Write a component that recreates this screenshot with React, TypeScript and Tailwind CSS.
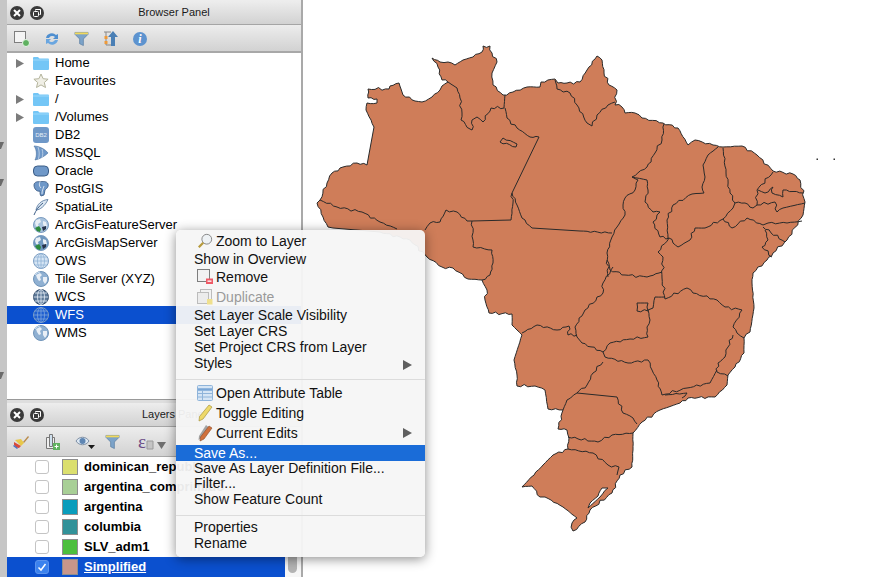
import React from 'react';

const coast = [
  '368 89 389 89 390 86 399 83 403 95 415 101 422 102 432 97 440 90 442 86 448 82 442 80 438 67 432 58 440 62 448 62 455 65 463 60 473 57 482 52 483 46 490 46 492 53 497 62 492 73 493 85 503 95 513 92 527 87 540 87 541 82 555 79 558 83 567 83 580 82 587 70 597 56 602 60 604 73 609 85 617 90 615 105 622 107 625 113 635 113 642 118 663 123 678 128 688 145 695 140 713 145 723 147 742 146 757 155 773 171 793 174 800 180 805 202 803 215 787 240 773 253 767 260 753 273 752 283 754 308 750 332 744 338 744 353 735 367 728 375 727 385 715 397 688 398 680 403 660 410 642 422 633 433 633 450 632 467 620 475 612 493 590 510 585 522 573 531 572 523 577 518 563 507 545 497 540 497 532 486 522 487 543 465 553 455 568 449 569 438 567 430 558 429 563 410 548 409 545 390 535 386 517 386 517 375 514 360 522 335 512 325 512 314 489 313 485 300 487 290 482 280 468 279 453 268 442 267 427 257 410 240 380 232 333 228 328 227 323 217 317 203 320 200 327 183 332 173 343 167 357 163 367 165 374 127 366 110 367 103 377 103 377 99 368 98 368 89',
  '588 508 600 497 608 488 602 488 598 496 590 503 588 508',
];

const borders = [
  '320 200 337 207 362 212 380 222 397 229',
  '448 82 457 88 460 98 462 113 461 120 470 129 472 130 472 120 477 117 483 122 491 108 504 108 505 95',
  '505 108 507 118 517 128 530 137 539 137 512 193 513 203 511 220 472 221 467 221 457 212 446 210 440 222 430 223 425 230',
  '500 142 503 138 517 144 516 147 500 142',
  '512 193 517 205 522 218 532 228 580 231 612 233',
  '472 221 473 240 473 247 492 250 493 263 490 275 482 280',
  '555 80 557 89 570 93 577 105 587 123 592 126 597 115 608 105 615 102',
  '664 124 662 140 655 153 647 167 632 177 638 180 635 190 625 198 623 205 625 215 617 227 612 237 607 253 608 277',
  '632 177 647 180 648 190 645 202 653 212 660 212 653 222 660 237 669 238',
  '718 147 708 155 703 165 705 177 702 187 704 193 692 194 673 205 667 220 668 238',
  '669 238 678 247 690 240 695 228 705 228 723 219 733 208 735 203 730 193 726 173 723 148',
  '735 203 745 203 753 208 757 205 757 190 773 172',
  '758 190 765 193 773 187 772 193 783 197 783 190 803 193',
  '757 205 775 202 777 212 783 208 805 203',
  '723 219 732 228 747 218 763 225 768 223 787 223 802 221',
  '763 227 785 242',
  '765 230 768 240 762 247 772 257',
  '669 238 658 252 663 257 662 278 665 299',
  '607 260 610 270 625 275 647 277 662 272',
  '613 267 603 283 603 293 585 310 575 327 577 337',
  '577 335 568 335 569 326 557 330 537 325 522 333',
  '577 337 582 343 603 352 610 343 630 339 648 337 647 327 650 320 648 310 653 308 655 297 665 297',
  '637 303 648 303 648 311 637 311 637 303',
  '665 299 687 288 693 293 717 300 725 307 742 310 733 327 737 333 744 338',
  '733 335 728 347 725 357 718 363 717 372 728 376',
  '717 370 710 383 687 388 662 395 657 380 652 370 648 360 628 363 605 357 603 352',
  '603 362 593 373 587 385 577 393 567 400 563 410',
  '577 393 617 397 623 413 633 418 637 424',
  '665 395 687 393 682 398',
  '568 437 598 442 612 435 633 433',
  '568 449 593 453 608 465 619 467 617 475',
];

// long runs are the straight state lines, shorter ones get a little wobble like the real outline
const roughen = (pts: string) => {
  const n = pts.split(' ').map(Number);
  let out = `${n[0]} ${n[1]}`;
  for (let i = 2; i < n.length; i += 2) {
    const [x0, y0, x1, y1] = [n[i - 2], n[i - 1], n[i], n[i + 1]];
    const len = Math.hypot(x1 - x0, y1 - y0);
    if (len > 6 && len <= 36) {
      const steps = Math.round(len / 3.5);
      for (let s = 1; s < steps; s++) {
        const t = s / steps;
        const amp = Math.sin(Math.PI * t) * (Math.sin(x0 * 1.7 + y1 + s * 2.3) + Math.sin(y0 * 0.9 + s * 4.1)) * 0.8;
        const px = x0 + (x1 - x0) * t - ((y1 - y0) / len) * amp;
        const py = y0 + (y1 - y0) * t + ((x1 - x0) / len) * amp;
        out += ` ${px.toFixed(1)} ${py.toFixed(1)}`;
      }
    }
    out += ` ${x1} ${y1}`;
  }
  return out;
};

const Folder = () => (
  <svg width="16" height="14" viewBox="0 0 16 14">
    <path d="M0 2a1 1 0 0 1 1-1h4l1.500 1.500H15a1 1 0 0 1 1 1V13a1 1 0 0 1-1 1H1a1 1 0 0 1-1-1z" fill="#74c6f6" />
    <rect x="0" y="3.500" width="16" height="1" fill="#9bd8fa" />
  </svg>
);

const Star = () => (
  <svg width="16" height="16" viewBox="0 0 16 16">
    <path d="M8 1l2.100 4.700 5 .5-3.800 3.300 1.200 5L8 11.900 3.500 14.500l1.200-5L.9 6.200l5-.5z" fill="#f0efe6" stroke="#b4b49c" />
  </svg>
);

const Globe = ({ fill = '#9dbcdc', land = false, dark = false, line = '#ffffff' }: { fill?: string; land?: boolean; dark?: boolean; line?: string }) => (
  <svg width="16" height="16" viewBox="0 0 16 16">
    <circle cx="8" cy="8" r="7.500" fill={fill} stroke={dark ? '#37506e' : '#7b9cc0'} />
    {land ? (
      <>
        <path d="M3 3l4-1 1 3-3 2 1 3-3-1-1-3zM10 4l3 1 1 4-3 1-1-3z" fill="#e8eef5" />
        <path d="M2 11l4-2 2 3-1 3-3-1z" fill="#2d8a3e" />
        <path d="M9 10l4-1 0 3-3 2z" fill="#27324a" />
      </>
    ) : (
      <>
        <ellipse cx="8" cy="8" rx="3.500" ry="7.500" fill="none" stroke={line} strokeWidth="0.800" />
        <path d="M.5 8h15M1.700 4h12.600M1.700 12h12.600M8 .5v15" stroke={line} strokeWidth="0.800" />
      </>
    )}
  </svg>
);

const WorldGlobe = () => (
  <svg width="16" height="16" viewBox="0 0 16 16">
    <circle cx="8" cy="8" r="7.500" fill="#8fb0d2" stroke="#6f93b8" />
    <path d="M3 4l4-2 2 2-2 2 1 3-2 1-2-3zM10 6l4 0 0 4-2 3-2-3z" fill="#e9eff6" />
    <path d="M2 4a7 7 0 0 1 5-3" stroke="#c9dcef" fill="none" />
  </svg>
);

const treeRows: { label: string; arrow?: boolean; icon: React.ReactNode; selected?: boolean }[] = [
  { label: 'Home', arrow: true, icon: <Folder /> },
  { label: 'Favourites', icon: <Star /> },
  { label: '/', arrow: true, icon: <Folder /> },
  { label: '/Volumes', arrow: true, icon: <Folder /> },
  {
    label: 'DB2',
    icon: (
      <span className="flex h-4 w-4 items-center justify-center rounded-[3px] bg-[#6f98c8] text-[6px] leading-none text-[#e6eef7]">DB2</span>
    ),
  },
  {
    label: 'MSSQL',
    icon: (
      <svg width="16" height="16" viewBox="0 0 16 16">
        <path d="M1 1c5 0 11 3 14 7-3 3-8 6-13 7 2-4 2-10-1-14z" fill="#6f98c8" stroke="#48709f" strokeWidth="0.600" />
        <path d="M5 2c1.500 4 1.500 8 .5 12M9 4c1 3 1 6 0 9" stroke="#d5e2f0" fill="none" strokeWidth="0.700" />
      </svg>
    ),
  },
  {
    label: 'Oracle',
    icon: (
      <svg width="16" height="16" viewBox="0 0 16 16">
        <rect x="0.500" y="3" width="15" height="10" rx="4" fill="#6f98c8" stroke="#3b5c85" />
      </svg>
    ),
  },
  {
    label: 'PostGIS',
    icon: (
      <svg width="16" height="16" viewBox="0 0 16 16">
        <path d="M1 4c0-3 4-4 6-3 2-1 7-1 8 2 1 3-2 5-3 6l-1 5-3 1c-1-1-1-3-1-5-3 1-6-2-6-6z" fill="#6f98c8" stroke="#30527d" strokeWidth="0.800" />
        <path d="M7 1c-1 2-1 4 1 6M11 5c-1 3-2 5-2 8" stroke="#ffffff" fill="none" strokeWidth="0.700" />
      </svg>
    ),
  },
  {
    label: 'SpatiaLite',
    icon: (
      <svg width="16" height="16" viewBox="0 0 16 16">
        <path d="M15 .5C9 1 4 5 3 11c4 0 9-4 12-10.500z" fill="#dbe6f1" stroke="#50739c" strokeWidth="0.800" />
        <path d="M1 16c2-5 5-9 9-12" stroke="#3e5f88" fill="none" />
      </svg>
    ),
  },
  { label: 'ArcGisFeatureServer', icon: <Globe land fill="#a8c3de" /> },
  { label: 'ArcGisMapServer', icon: <Globe land fill="#6f98c0" /> },
  { label: 'OWS', icon: <Globe fill="#d6e5f4" line="#8fb2d6" /> },
  { label: 'Tile Server (XYZ)', icon: <WorldGlobe /> },
  { label: 'WCS', icon: <Globe fill="#5e7a99" dark line="#e6eef6" /> },
  { label: 'WFS', selected: true, icon: <Globe fill="#1f5fd0" line="#7ea6dd" /> },
  { label: 'WMS', icon: <WorldGlobe /> },
];

const layers = [
  { name: 'dominican_republic', color: '#dbdf6e' },
  { name: 'argentina_comprimido', color: '#a8cf96' },
  { name: 'argentina', color: '#0a9dbc' },
  { name: 'columbia', color: '#329299' },
  { name: 'SLV_adm1', color: '#4cbf3e' },
  { name: 'Simplified', color: '#c9968a', selected: true },
];

const WindowButtons = () => (
  <div className="flex w-[40px] shrink-0 items-center gap-[6px] pl-[3px]">
    <span className="flex h-[14px] w-[14px] items-center justify-center rounded-full bg-[#3a3a3a]">
      <svg width="8" height="8" viewBox="0 0 8 8">
        <path d="M1 1l6 6M7 1L1 7" stroke="#ffffff" strokeWidth="2" />
      </svg>
    </span>
    <span className="flex h-[14px] w-[14px] items-center justify-center rounded-full bg-[#3a3a3a]">
      <svg width="8" height="8" viewBox="0 0 8 8">
        <rect x="0.500" y="2.500" width="5" height="5" rx="1" fill="none" stroke="#ffffff" />
        <path d="M2.500 1.500V.5h5v5H6.500" fill="none" stroke="#ffffff" />
      </svg>
    </span>
  </div>
);

const TitleBar = ({ title }: { title: string }) => (
  <div className="flex h-[24px] shrink-0 items-center border-b border-[#a5a5a5] bg-gradient-to-b from-[#ededed] to-[#d2d2d2]">
    <WindowButtons />
    <div className="flex-1 text-center text-[11px] text-[#1a1a1a]">{title}</div>
  </div>
);

const Funnel = () => (
  <svg width="15" height="16" viewBox="0 0 16 16">
    <path d="M1 1h14v2l-5 5v7l-4-2V8L1 3z" fill="#7ca3c9" stroke="#54789e" strokeWidth="0.700" />
    <path d="M1 1h14v2H1z" fill="#f2d95c" />
  </svg>
);

const menuIcons: Record<string, React.ReactNode> = {
  zoom: (
    <svg width="18" height="18" viewBox="0 0 18 18">
      <circle cx="11" cy="7" r="5.500" fill="#eef2f5" stroke="#7c7c7c" />
      <path d="M7 11l-5 5" stroke="#b69a3c" strokeWidth="2.500" />
    </svg>
  ),
  remove: (
    <svg width="16" height="16" viewBox="0 0 16 16">
      <rect x="0.500" y="0.500" width="12" height="12" fill="#f2f2f2" stroke="#7e7e7e" />
      <rect x="9" y="9.500" width="7" height="5.500" fill="#ee5a66" />
      <rect x="10.500" y="11.500" width="4" height="1.300" fill="#ffffff" />
    </svg>
  ),
  duplicate: (
    <svg width="16" height="16" viewBox="0 0 16 16">
      <rect x="3.500" y="0.500" width="11" height="12" fill="#f2f2f2" stroke="#bcbcbc" />
      <rect x="0.500" y="3.500" width="11" height="11" fill="#ececec" stroke="#bcbcbc" />
      <rect x="10" y="10" width="5.500" height="5.500" fill="#efe08e" />
    </svg>
  ),
  table: (
    <svg width="16" height="16" viewBox="0 0 16 16">
      <rect x="0.500" y="0.500" width="15" height="15" rx="1" fill="#d5e5f5" stroke="#8fb4da" />
      <path d="M1 4.500h14" stroke="#79a6d6" strokeWidth="2.500" />
      <path d="M1 8.500h14M1 12h14M5.500 5v10" stroke="#8fb4da" />
    </svg>
  ),
  pencil: (
    <svg width="16" height="18" viewBox="0 0 16 18">
      <path d="M12 1l3 2-9 12-4 2 .5-4.500z" fill="#eed96a" stroke="#a8953c" strokeWidth="0.700" />
    </svg>
  ),
  edits: (
    <svg width="16" height="18" viewBox="0 0 16 18">
      <path d="M9 1l2.500 2-7 11-3 2 .5-4z" fill="#a3a3a3" />
      <path d="M12 2l3 2-8 11-4 2 .5-4z" fill="#d0703c" stroke="#8d4a25" strokeWidth="0.600" />
    </svg>
  ),
};

const Arrow = () => (
  <svg width="9" height="10" viewBox="0 0 9 10" className="absolute right-[13px] top-[5px]">
    <path d="M0 0l9 5-9 5z" fill="#5f5f5f" />
  </svg>
);

const menu: { label?: string; icon?: string; h?: string; sub?: boolean; disabled?: boolean; active?: boolean; sep?: string }[] = [
  { label: 'Zoom to Layer', icon: 'zoom', h: 'h-[18px]' },
  { label: 'Show in Overview', h: 'h-[18px]' },
  { label: 'Remove', icon: 'remove', h: 'h-[18px]' },
  { label: 'Duplicate', icon: 'duplicate', disabled: true, h: 'h-[21px] pt-[1px]' },
  { label: 'Set Layer Scale Visibility', h: 'h-[16px]' },
  { label: 'Set Layer CRS', h: 'h-[16px]' },
  { label: 'Set Project CRS from Layer', h: 'h-[16px]' },
  { label: 'Styles', sub: true, h: 'h-[16px]' },
  { sep: 'pt-[8px] pb-[3px]' },
  { label: 'Open Attribute Table', icon: 'table', h: 'h-[20px]' },
  { label: 'Toggle Editing', icon: 'pencil', h: 'h-[20px]' },
  { label: 'Current Edits', icon: 'edits', sub: true, h: 'h-[20px]' },
  { label: 'Save As...', active: true, h: 'h-[16px] mt-[2px] pb-[1px]' },
  { label: 'Save As Layer Definition File...', h: 'h-[15px] -mt-[1px]' },
  { label: 'Filter...', h: 'h-[16px]' },
  { label: 'Show Feature Count', h: 'h-[16px]' },
  { sep: 'pt-[8px] pb-[3px]' },
  { label: 'Properties', h: 'h-[16px]' },
  { label: 'Rename', h: 'h-[16px]' },
];

const ContextMenu = () => (
  <div className="absolute left-[176px] top-[230px] h-[327px] w-[249px] rounded-[5px] bg-[#f6f6f6]/95 pt-[2px] text-[14px] leading-none text-[#111] shadow-[0_2px_12px_rgba(0,0,0,0.45)]">
    {menu.map((item, i) =>
      item.sep ? (
        <div key={i} className={item.sep}>
          <div className="h-[1px] bg-[#dcdcdc]" />
        </div>
      ) : (
        <div
          key={i}
          className={`relative flex items-center ${item.h} ${item.icon ? 'pl-[21px]' : 'pl-[18px]'} ${item.active ? 'bg-[#1a6cd8] text-white' : ''} ${item.disabled ? 'text-[#9a9a9a]' : ''}`}
        >
          {item.icon && <span className="mr-[3px] flex w-[16px] items-center justify-center">{menuIcons[item.icon]}</span>}
          <span>{item.label}</span>
          {item.sub && <Arrow />}
        </div>
      )
    )}
  </div>
);

const App: React.FC = () => {
  return (
    <div className="relative flex h-[577px] w-[893px] overflow-hidden bg-white font-['Liberation_Sans',sans-serif] text-[13px] text-black">
      {/* left dock edge */}
      <div className="flex w-[7px] shrink-0 flex-col bg-[#c6c6c6]">
        {[142, 30, 186].map((gap, i) => (
          <svg key={i} width="4" height="7" viewBox="0 0 4 7" style={{ marginTop: gap }}>
            <path d="M0 0h4L1 7H0z" fill="#6a6a6a" />
          </svg>
        ))}
      </div>

      {/* docked panels */}
      <div className="flex w-[294px] shrink-0 flex-col">
        <div className="h-[1px] shrink-0 bg-[#ededed]" />
        <TitleBar title="Browser Panel" />
        <div className="flex h-[28px] shrink-0 items-center gap-[14px] border-b-2 border-[#a8a8a8] bg-gradient-to-b from-[#ededed] to-[#d2d2d2] pl-[7px] pt-[2px]">
          <svg width="16" height="16" viewBox="0 0 16 16">
            <rect x="0.500" y="0.500" width="11" height="11" fill="#f4f4f4" stroke="#7e7e7e" />
            <circle cx="12" cy="12" r="3.500" fill="#5fb160" stroke="#e8f4e8" />
          </svg>
          <svg width="16" height="16" viewBox="0 0 16 16">
            <path d="M2 7a6 6 0 0 1 10-3l2-1v5H9l2-2a4 4 0 0 0-6 1z" fill="#4f8fd0" />
            <path d="M14 9a6 6 0 0 1-10 3l-2 1V8h5L5 10a4 4 0 0 0 6-1z" fill="#6aa6e0" />
          </svg>
          <Funnel />
          <svg width="16" height="16" viewBox="0 0 16 16">
            <path d="M1 1h7M3 1v13h5" stroke="#888" fill="none" />
            <rect x="1.500" y="5" width="3" height="3" fill="#ee9a3a" />
            <rect x="1.500" y="10" width="3" height="3" fill="#ee9a3a" />
            <path d="M10 0l5 6h-3v9H8V6H5z" fill="#4a7fb5" />
          </svg>
          <span className="flex h-[14px] w-[14px] items-center justify-center rounded-full bg-[#5d93cf] font-['Liberation_Serif',serif] text-[12px] font-bold italic leading-none text-white">i</span>
        </div>
        <div className="h-[347px] shrink-0 border-b border-[#999] bg-white pt-[1px]">
          {treeRows.map((row) => (
            <div key={row.label} className={`flex h-[18px] items-center ${row.selected ? 'bg-[#0b50cf] text-white' : ''}`}>
              <span className="flex w-[26px] shrink-0 justify-center">
                {row.arrow && (
                  <svg width="8" height="9" viewBox="0 0 8 9">
                    <path d="M0 0l8 4.500L0 9z" fill="#7c7c7c" />
                  </svg>
                )}
              </span>
              <span className="flex w-[16px] shrink-0 items-center justify-center">{row.icon}</span>
              <span className="ml-[6px] whitespace-nowrap">{row.label}</span>
            </div>
          ))}
        </div>
        <div className="h-[3px] shrink-0 bg-[#dedede]" />
        <TitleBar title="Layers Panel" />
        <div className="flex h-[30px] shrink-0 items-center gap-[15px] border-b border-[#a8a8a8] bg-gradient-to-b from-[#ededed] to-[#d2d2d2] pl-[6px]">
          <svg width="16" height="16" viewBox="0 0 16 16">
            <path d="M10 8l5-6 1 1-5 6z" fill="#b88a4a" />
            <path d="M2 6l6-1 3 4-3 3z" fill="#e8c84a" />
            <path d="M1 8l7 4-2 2c-2 0-4-2-5-3z" fill="#d84a3a" />
            <path d="M1 11l4 3-1 1-4-3z" fill="#4a6fc0" />
          </svg>
          <svg width="16" height="18" viewBox="0 0 16 18">
            <path d="M2.500 4.500h8v11h-8z" fill="#efefef" stroke="#777" />
            <path d="M5.500 1.500h3v12h-3z" fill="#cfe0ee" stroke="#777" />
            <rect x="9" y="10" width="7" height="7" fill="#5fb160" />
            <path d="M12.500 11.500v4M10.500 13.500h4" stroke="#fff" />
          </svg>
          <svg width="20" height="16" viewBox="0 0 20 16">
            <path d="M1 7c3-5 10-5 13 0-3 5-10 5-13 0z" fill="#dce7f2" stroke="#7d8ea3" />
            <circle cx="7.500" cy="7" r="3" fill="#5f86b3" />
            <path d="M13 11h7l-3.500 4z" fill="#1a1a1a" />
          </svg>
          <span className="-ml-[5px]">
            <Funnel />
          </span>
          <span className="ml-[3px] flex items-center font-['Liberation_Serif',serif] text-[19px] leading-none text-[#6a4a86]">
            ε
            <svg width="21" height="12" viewBox="0 0 21 12" className="mt-[5px]">
              <path d="M1 3h6v8H1z" fill="#c4c4c4" stroke="#9a9a9a" />
              <path d="M11 4h9l-4.500 7z" fill="#6f6f6f" />
            </svg>
          </span>
        </div>
        <div className="relative flex-1 bg-white">
          {layers.map((layer) => (
            <div key={layer.name} className={`flex h-[20px] w-[278px] items-center ${layer.selected ? 'bg-[#0b50cf] text-white' : ''}`}>
              <span
                className={`ml-[28px] flex h-[14px] w-[14px] shrink-0 items-center justify-center rounded-[3px] border ${layer.selected ? 'border-[#5a93ee] bg-[#3b82ee]' : 'border-[#c4c4c4] bg-white'}`}
              >
                {layer.selected && (
                  <svg width="10" height="10" viewBox="0 0 10 10">
                    <path d="M1.500 5.500l2.500 2.500 4.500-6" fill="none" stroke="#fff" strokeWidth="1.500" />
                  </svg>
                )}
              </span>
              <span className="ml-[13px] h-[16px] w-[16px] shrink-0 border border-[#8f8f8f]" style={{ background: layer.color }} />
              <span className={`ml-[6px] whitespace-nowrap font-bold ${layer.selected ? 'underline' : ''}`}>{layer.name}</span>
            </div>
          ))}
          <div className="absolute right-0 top-0 h-full w-[16px] bg-[#f6f6f6]">
            <div className="absolute bottom-[4px] left-[3px] h-[16px] w-[9px] rounded-b-[5px] bg-[#b4b4b4]" />
          </div>
        </div>
      </div>

      <div className="w-[2px] shrink-0 bg-[#a9a9a9]" />

      {/* map canvas */}
      <div className="flex-1 bg-white">
        <svg width="590" height="577" viewBox="303 0 590 577">
          <path d={coast.map((c) => `M${roughen(c)}Z`).join(' ')} fill="#cf7d59" fillRule="evenodd" stroke="#2a2a2a" strokeWidth="1" strokeLinejoin="round" />
          {borders.map((pts, i) => (
            <polyline key={i} points={roughen(pts)} fill="none" stroke="#2a2a2a" strokeWidth="1" strokeLinejoin="round" />
          ))}
          <rect x="816.500" y="158.500" width="1.500" height="1.500" fill="#333" />
          <rect x="833.500" y="158.500" width="1.500" height="1.500" fill="#333" />
        </svg>
      </div>

      <ContextMenu />
    </div>
  );
};

export default App;
